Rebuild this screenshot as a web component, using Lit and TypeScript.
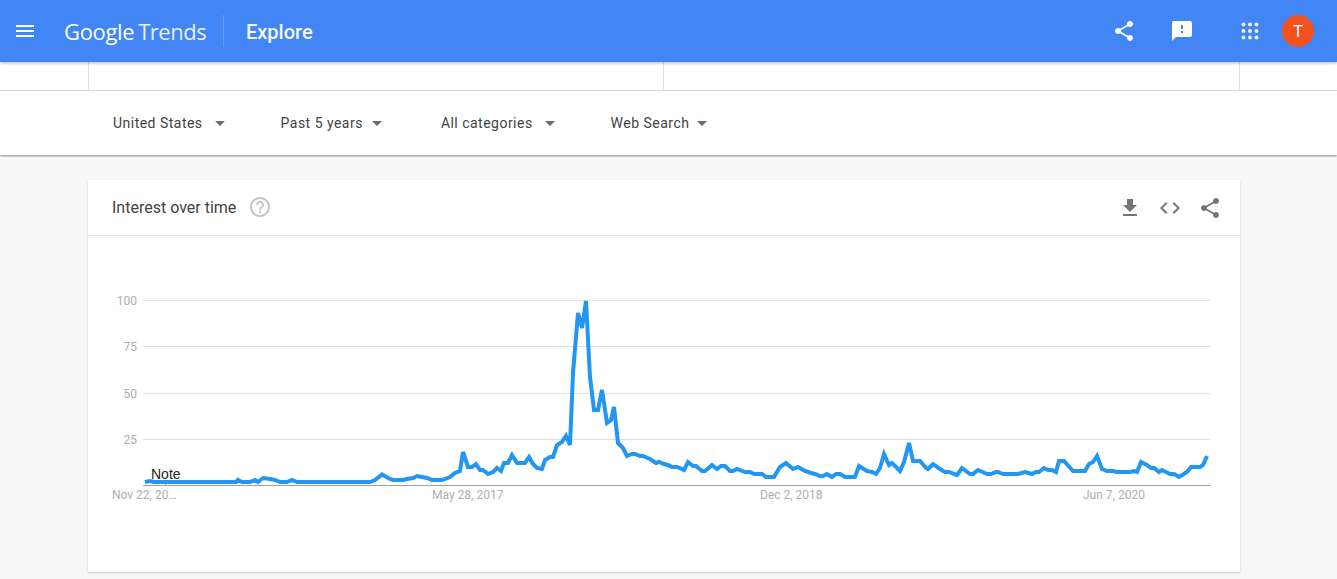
import { LitElement, html, css, svg } from 'lit';
import { customElement } from 'lit/decorators.js';

const FILTERS = [
  { label: 'United States', arrowGap: 12, after: 56 },
  { label: 'Past 5 years', arrowGap: 9, after: 59 },
  { label: 'All categories', arrowGap: 12, after: 56 },
  { label: 'Web Search', arrowGap: 8, after: 0 },
];

const SHARE =
  'M18 16.08c-.76 0-1.44.3-1.96.77L8.91 12.7c.05-.23.09-.46.09-.7s-.04-.47-.09-.7l7.05-4.11c.54.5 1.25.81 2.04.81 1.66 0 3-1.34 3-3s-1.34-3-3-3-3 1.34-3 3c0 .24.04.47.09.7L8.04 9.81C7.5 9.31 6.79 9 6 9c-1.66 0-3 1.34-3 3s1.34 3 3 3c.79 0 1.5-.31 2.04-.81l7.12 4.16c-.05.21-.08.43-.08.65 0 1.61 1.31 2.92 2.92 2.92 1.61 0 2.92-1.31 2.92-2.92s-1.31-2.92-2.92-2.92z';

// page coordinates, the svg viewBox below lines up with the page
const TREND =
  '145,482 150,481 154,482 236,482 238,480 242,482 250,482 255,480 258,482 263,478 270,479 275,480 280,482 287,482 292,480 297,482 370,482 375,480 382,474.5 390,479 393,480 ' +
  '403,480 407,479 410,478.5 413,478 417,476 422,477 427,478 432,480 442,480 450,477 455,473 460,471 463,452 468,467 472,467 476,464 480,470 483,470 488,474 493,472 497,468 501,471 504,463 508,463 512,455 517,463 525,463 529,457 533,464 537,468 542,469 545,460 550,457 553,457 557,445 562,442 566,436 570,445 573,373 578,313 582,328 586,301 590,377 594,410 598,410 602,390 607,423 611,420 614,407 618,443 623,448 627,456 632,454 635,454 640,456 643,456 650,459 656,463 659,462 664,464 668,465 672,467 677,467 680,468 ' +
  '684,470 688,462 693,466 696,466 702,471 705,471 712,465 717,469 721,466 725,466 730,471 733,471 737,469 745,472 750,472 754,474 762,474 766,477 774,477 780,467 786,463 793,469 798,467 805,471 811,473 815,474 820,476 823,476 827,474 832,477 836,474 840,474 845,477 855,477 859,466 867,471 872,472 876,474 880,468 884,454 889,465 892,463 900,471 904,462 909,443 913,461 920,461 926,468 928,469 933,464 940,469 945,472 949,472 957,475 962,468 970,474 973,474 978,470 987,474 991,474 996,472 998,472 1003,474 1018,474 1025,472 1032,474 1036,472 1039,472 1044,468 1048,470 1052,470 1056,472 1059,461 1064,461 1073,471 1085,471 1089,464 1093,462 1097,456 1102,469 1107,471 1113,471 1117,472 1130,472 1134,471 1137,472 1141,462 1147,465 1151,468 1154,468 1159,472 1162,470 1170,474 1174,474 1179,477 1187,472 1191,467 1200,467 1203,465 1207,456';

const Y_TICKS = [
  { label: '100', y: 300 },
  { label: '75', y: 346 },
  { label: '50', y: 393 },
  { label: '25', y: 439 },
];

const X_TICKS = [
  { label: 'Nov 22, 20…', x: 112 },
  { label: 'May 28, 2017', x: 432 },
  { label: 'Dec 2, 2018', x: 760 },
  { label: 'Jun 7, 2020', x: 1083 },
];

@customElement('app-root')
export class AppRoot extends LitElement {
  static styles = css`
    :host {
      display: block;
      height: 579px;
      overflow: hidden;
      background: #f7f7f7;
      font-family: Roboto, 'Liberation Sans', sans-serif;
    }
    svg {
      display: block;
      flex: none;
    }
    .topbar {
      position: relative;
      z-index: 2;
      display: flex;
      align-items: center;
      height: 62px;
      padding: 0 23px 0 13px;
      background: #4285f4;
      color: #fff;
      box-shadow: 0 1px 3px rgba(0, 0, 0, 0.3);
    }
    .topbar svg {
      fill: #fff;
    }
    .logo {
      width: 159px;
      margin-left: 27px;
      font-family: 'Open Sans', sans-serif;
      font-size: 22px;
      font-weight: 500;
      letter-spacing: -0.35px;
      white-space: nowrap;
    }
    .logo span {
      margin-left: 4px;
      font-size: 22px;
      font-weight: 400;
      letter-spacing: -0.5px;
      opacity: 0.88;
    }
    .page-name {
      height: 32px;
      margin-right: auto;
      padding-left: 22px;
      border-left: 1px solid rgba(255, 255, 255, 0.2);
      font-size: 20px;
      font-weight: 500;
      line-height: 34px;
      opacity: 0.95;
    }
    .feedback {
      margin-left: 34px;
    }
    .apps {
      margin-left: 44px;
      opacity: 0.9;
    }
    .avatar {
      width: 32px;
      height: 32px;
      margin-left: 20px;
      border-radius: 50%;
      background: #f4511e;
      font-size: 17px;
      line-height: 33px;
      text-align: center;
    }
    .search-band {
      display: grid;
      grid-template-columns: 575px 577px;
      height: 28px;
      padding: 0 88px;
      background: #fff;
      border-bottom: 1px solid #e0e0e0;
    }
    .search-band div {
      border-left: 1px solid #e0e0e0;
    }
    .search-band div:last-child {
      border-right: 1px solid #e0e0e0;
    }
    .filters {
      position: relative;
      z-index: 1;
      display: flex;
      align-items: center;
      height: 64px;
      padding-left: 113px;
      background: #fff;
      color: #424242;
      font-size: 14px;
      letter-spacing: 0.48px;
      box-shadow: 0 1px 2px rgba(0, 0, 0, 0.45);
    }
    .filter {
      display: flex;
      align-items: center;
    }
    .arrow {
      width: 0;
      height: 0;
      border-left: 5px solid transparent;
      border-right: 5px solid transparent;
      border-top: 5px solid #6b6b6b;
    }
    .card {
      margin: 25px 97px 0 88px;
      background: #fff;
      box-shadow: 0 1px 2px rgba(0, 0, 0, 0.16);
    }
    .card-head {
      display: flex;
      align-items: center;
      height: 55px;
      padding: 0 18px 0 24px;
      border-bottom: 1px solid #e0e0e0;
      color: #424242;
      font-size: 16px;
    }
    .help {
      margin-left: 12px;
      margin-right: auto;
      margin-bottom: 2px;
      fill: #c4c4c4;
    }
    .tool {
      margin-left: 16px;
      fill: #757575;
    }
    .chart text {
      font-size: 12px;
      fill: #aeaeae;
    }
    .chart .note {
      font-family: 'Liberation Sans', sans-serif;
      font-size: 14px;
      fill: #222;
    }
    .chart .grid {
      stroke: #e0e0e0;
    }
    .chart .axis {
      stroke: #9e9e9e;
    }
    .chart .trend {
      fill: none;
      stroke: #2196f3;
      stroke-width: 4;
      stroke-linejoin: miter;
    }
  `;

  private icon(d: string, cls = '') {
    return html`<svg class=${cls} width="24" height="24" viewBox="0 0 24 24"><path d=${d}></path></svg>`;
  }

  private appsIcon() {
    const dots = [5.5, 12, 18.5];
    return html`<svg class="apps" width="24" height="24" viewBox="0 0 24 24">
      ${dots.map((y) => dots.map((x) => svg`<circle cx=${x} cy=${y} r="2"></circle>`))}
    </svg>`;
  }

  private chart() {
    return html`<svg class="chart" width="1152" height="336" viewBox="88 236 1152 336">
      ${Y_TICKS.map(
        (t) => svg`
          <line class="grid" x1="143" x2="1210" y1=${t.y + 0.5} y2=${t.y + 0.5}></line>
          <text x="137" y=${t.y + 5} text-anchor="end">${t.label}</text>
        `,
      )}
      <line class="axis" x1="143" x2="1210" y1="485.5" y2="485.5"></line>
      <line class="axis" x1="165.5" x2="165.5" y1="480" y2="485"></line>
      ${X_TICKS.map((t) => svg`<text x=${t.x} y="499">${t.label}</text>`)}
      <polyline class="trend" points=${TREND}></polyline>
      <text class="note" x="151" y="479">Note</text>
    </svg>`;
  }

  render() {
    return html`
      <header class="topbar">
        ${this.icon('M3 18h18v-2H3v2zm0-5h18v-2H3v2zm0-7v2h18V6H3z')}
        <div class="logo">Google<span>Trends</span></div>
        <div class="page-name">Explore</div>
        ${this.icon(SHARE)}
        ${this.icon(
          'M20 2H4c-1.1 0-1.99.9-1.99 2L2 22l4-4h14c1.1 0 2-.9 2-2V4c0-1.1-.9-2-2-2zm-7 12h-2v-2h2v2zm0-4h-2V6h2v4z',
          'feedback',
        )}
        ${this.appsIcon()}
        <div class="avatar">T</div>
      </header>
      <div class="search-band"><div></div><div></div></div>
      <nav class="filters">
        ${FILTERS.map(
          (f) => html`
            <div class="filter" style="margin-right:${f.after}px">
              ${f.label}
              <span class="arrow" style="margin-left:${f.arrowGap}px"></span>
            </div>
          `,
        )}
      </nav>
      <section class="card">
        <div class="card-head">
          Interest over time
          ${this.icon(
            'M11 18h2v-2h-2v2zm1-16C6.48 2 2 6.48 2 12s4.48 10 10 10 10-4.48 10-10S17.52 2 12 2zm0 18c-4.41 0-8-3.59-8-8s3.59-8 8-8 8 3.59 8 8-3.59 8-8 8zm0-14c-2.21 0-4 1.79-4 4h2c0-1.1.9-2 2-2s2 .9 2 2c0 2-3 1.75-3 5h2c0-2.25 3-2.5 3-5 0-2.21-1.79-4-4-4z',
            'help',
          )}
          ${this.icon('M19 9h-4V3H9v6H5l7 7 7-7zM5 18v2h14v-2H5z', 'tool')}
          ${this.icon('M9.4 16.6L4.8 12l4.6-4.6L8 6l-6 6 6 6 1.4-1.4zm5.2 0l4.6-4.6-4.6-4.6L16 6l6 6-6 6-1.4-1.4z', 'tool')}
          ${this.icon(SHARE, 'tool')}
        </div>
        ${this.chart()}
      </section>
    `;
  }
}
